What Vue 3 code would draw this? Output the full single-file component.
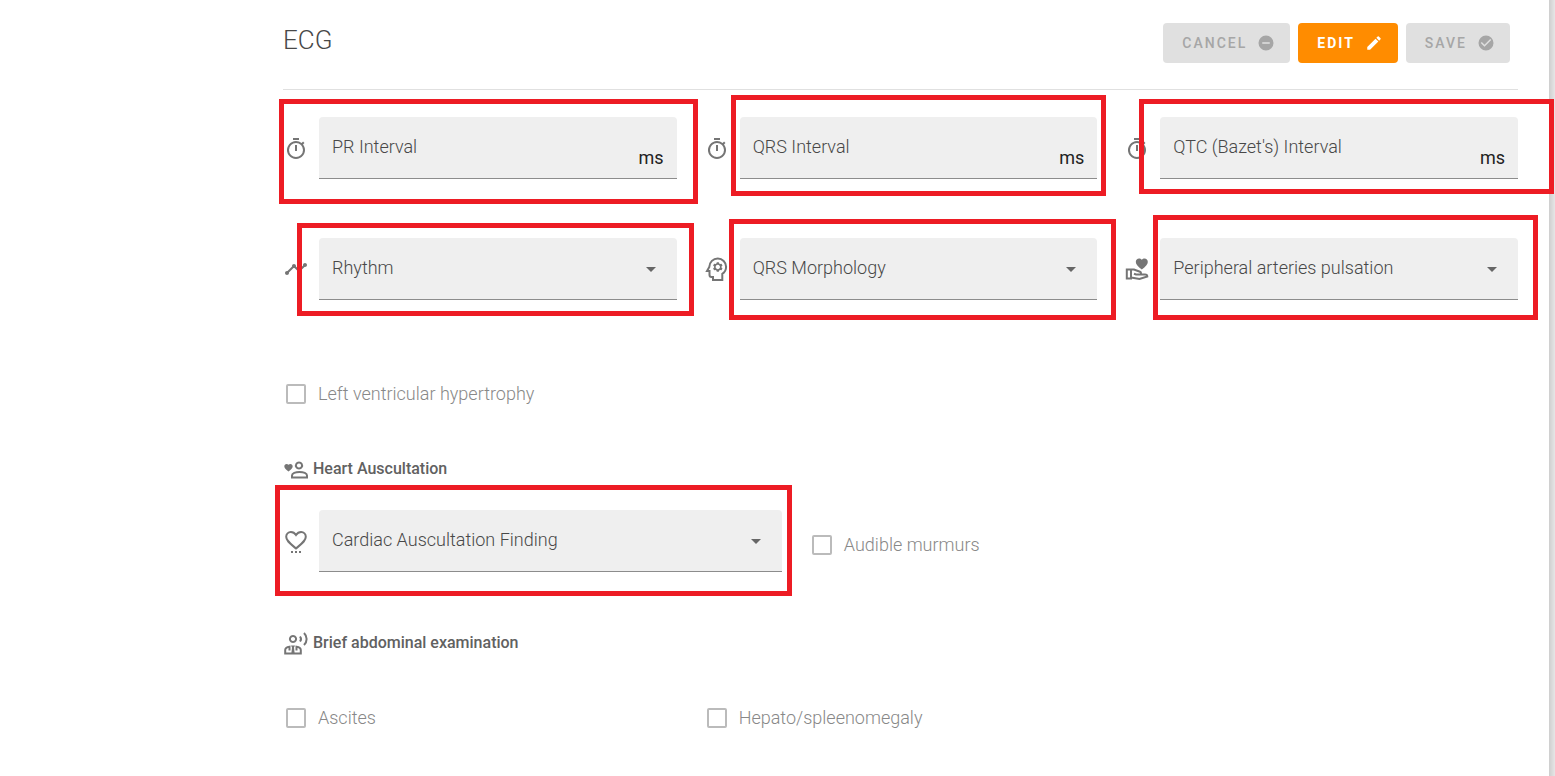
<script setup>
import { reactive } from 'vue'

const intervals = [
  { id: 'pr', label: 'PR Interval' },
  { id: 'qrs', label: 'QRS Interval' },
  { id: 'qtc', label: "QTC (Bazet's) Interval" },
]

const selects = [
  { id: 'rhythm', label: 'Rhythm', icon: 'timeline' },
  { id: 'morphology', label: 'QRS Morphology', icon: 'head' },
  { id: 'pulsation', label: 'Peripheral arteries pulsation', icon: 'hand' },
]

const values = reactive({
  pr: '', qrs: '', qtc: '', rhythm: '', morphology: '', pulsation: '', cardiac: '',
})
</script>

<template>
  <div class="page">
    <main class="content">
      <header class="head">
        <h1>ECG</h1>
        <div class="actions">
          <button type="button" class="btn" disabled>
            CANCEL
            <svg viewBox="0 0 24 24"><path d="M12 2a10 10 0 1 0 0 20 10 10 0 0 0 0-20zm5 11H7v-2h10v2z" /></svg>
          </button>
          <button type="button" class="btn primary">
            EDIT
            <svg viewBox="0 0 24 24"><path d="M3 17.25V21h3.75L17.81 9.94l-3.75-3.75L3 17.25zM20.71 7.04a1 1 0 0 0 0-1.41l-2.34-2.34a1 1 0 0 0-1.41 0l-1.83 1.83 3.75 3.75 1.83-1.83z" /></svg>
          </button>
          <button type="button" class="btn" disabled>
            SAVE
            <svg viewBox="0 0 24 24"><path d="M12 2a10 10 0 1 0 0 20 10 10 0 0 0 0-20zm-2 15l-5-5 1.41-1.41L10 14.17l7.59-7.59L19 8l-9 9z" /></svg>
          </button>
        </div>
      </header>

      <section class="grid first">
        <div v-for="f in intervals" :key="f.id" class="cell third">
          <svg class="icon low" viewBox="0 0 24 24"><path d="M15 1H9v2h6V1zm-4 13h2V8h-2v6zm8.03-6.61l1.42-1.42c-.43-.51-.9-.99-1.41-1.41l-1.42 1.42A8.96 8.96 0 0 0 12 4a9 9 0 1 0 7.03 3.39zM12 20a7 7 0 1 1 0-14 7 7 0 0 1 0 14z" /></svg>
          <div class="field">
            <input :id="f.id" v-model="values[f.id]" type="text" />
            <label :for="f.id">{{ f.label }}</label>
            <span class="suffix">ms</span>
          </div>
          <span class="mark" :class="'mark-' + f.id"></span>
        </div>
      </section>

      <section class="grid second">
        <div v-for="f in selects" :key="f.id" class="cell third">
          <svg v-if="f.icon === 'timeline'" class="icon" viewBox="0 0 24 24"><path d="M23 8c0 1.1-.9 2-2 2-.18 0-.35-.02-.51-.07l-3.56 3.55c.05.16.07.34.07.52 0 1.1-.9 2-2 2s-2-.9-2-2c0-.18.02-.36.07-.52l-2.55-2.55c-.16.05-.34.07-.52.07s-.36-.02-.52-.07l-4.55 4.56c.05.16.07.33.07.51 0 1.1-.9 2-2 2s-2-.9-2-2 .9-2 2-2c.18 0 .35.02.51.07l4.56-4.55C8.02 9.36 8 9.18 8 9c0-1.1.9-2 2-2s2 .9 2 2c0 .18-.02.36-.07.52l2.55 2.55c.16-.05.34-.07.52-.07s.36.02.52.07l3.55-3.56C19.02 8.35 19 8.18 19 8c0-1.1.9-2 2-2s2 .9 2 2z" /></svg>
          <svg v-else-if="f.icon === 'head'" class="icon" viewBox="0 0 24 24">
            <path class="line" d="M8 23v-3H6.500a2 2 0 0 1-2-2v-4H2l2.300-4.100C4.500 5 8.100 1.500 12.800 1.500a8.300 8.300 0 0 1 8.300 8.300c0 3.200-1.600 5.700-3.800 7V23z" />
            <path fill-rule="evenodd" d="M11.800 5.200h2l.4 1.400.9.500 1.400-.4 1 1.800-1 1v1l1 1-1 1.800-1.400-.4-.9.500-.4 1.400h-2l-.4-1.400-.9-.5-1.400.4-1-1.800 1-1v-1l-1-1 1-1.800 1.400.4.900-.5zM12.800 7.800a2.200 2.200 0 1 0 .01 0z" />
          </svg>
          <svg v-else class="icon" viewBox="0 0 24 24">
            <path d="M16.800 12.500c-3.800-3.200-6-5-6-7.600 0-1.900 1.500-3.400 3.300-3.400 1 0 2 .5 2.700 1.300.7-.8 1.700-1.300 2.700-1.300 1.900 0 3.300 1.500 3.300 3.400 0 2.600-2.200 4.400-6 7.600z" />
            <path class="line" d="M1.800 12.500H6v9H1.800zM6 12.500h3l6 2.300c1.500.6 1.300 2.700-.3 2.700H11l-2-.8M15.500 17.500H20c1.500 0 2.300.8 2.300 2L14.500 22 6 20.500" />
          </svg>
          <div class="field">
            <select :id="f.id" v-model="values[f.id]"><option value=""></option></select>
            <label :for="f.id">{{ f.label }}</label>
            <span class="arrow"></span>
          </div>
          <span class="mark" :class="'mark-' + f.id"></span>
        </div>
      </section>

      <label class="check lvh"><input type="checkbox" disabled /><span>Left ventricular hypertrophy</span></label>

      <h2>
        <svg class="icon" viewBox="0 0 24 24">
          <path d="M4.500 14.500C2.300 12.500.3 11.200.3 9.200c0-1.300 1-2.300 2.300-2.300.7 0 1.400.3 1.900.9.500-.6 1.200-.9 1.900-.9 1.300 0 2.300 1 2.300 2.300 0 2-2 3.300-4.200 5.300z" />
          <path class="line" d="M15 5.400a3.100 3.100 0 1 0 .01 0zM8 20.500v-2c0-2.200 3.500-3.600 7.500-3.600s7.500 1.400 7.500 3.600v2z" />
        </svg>
        Heart Auscultation
      </h2>

      <section class="grid auscultation">
        <div class="cell five">
          <svg class="icon low" viewBox="0 0 24 24">
            <path class="line" d="M12 18.500C6.500 13.700 2.200 10.800 2.200 6.800 2.200 4 4.300 2 6.900 2 8.800 2 10.800 3.200 12 5c1.200-1.800 3.200-3 5.100-3 2.600 0 4.700 2 4.700 4.800 0 4-4.300 6.900-9.800 11.700z" />
            <path d="M7 21h2v2H7zm4 0h2v2h-2zm4 0h2v2h-2z" />
          </svg>
          <div class="field">
            <select id="cardiac" v-model="values.cardiac"><option value=""></option></select>
            <label for="cardiac">Cardiac Auscultation Finding</label>
            <span class="arrow"></span>
          </div>
          <span class="mark mark-cardiac"></span>
        </div>
        <label class="check third murmurs"><input type="checkbox" disabled /><span>Audible murmurs</span></label>
      </section>

      <h2 class="abdominal">
        <svg class="icon" viewBox="0 0 24 24">
          <path class="line" d="M9 4.900a3.100 3.100 0 1 0 .01 0zM5.500 22.500H1.200V19c0-1.700 1.500-2.700 4.300-3.200v3.700M12.500 22.500h4.300V19c0-1.700-1.500-2.700-4.300-3.200v3.700M5 22.500h8" />
          <path d="M7 14.500h4l-1 2 .6 5.500H7.400L8 16.500z" />
          <path class="line" d="M16 5.500c1.200 1.500 1.200 3.500 0 5M20 2c3.500 3.500 3.500 8.500 0 12" />
        </svg>
        Brief abdominal examination
      </h2>

      <section class="grid last">
        <label class="check third"><input type="checkbox" disabled /><span>Ascites</span></label>
        <label class="check third"><input type="checkbox" disabled /><span>Hepato/spleenomegaly</span></label>
      </section>
    </main>
    <div class="edge"></div>
  </div>
</template>

<style>
body {
  background: #fff;
}
</style>

<style scoped>
.page {
  display: flex;
  min-height: 100vh;
  font-family: Roboto, sans-serif;
  font-size: 18px;
  font-weight: 300;
  line-height: 24px;
  color: #484848;
}
.content {
  flex: 1;
  padding: 0 31px 0 283px;
}
.edge {
  width: 6px;
  background: linear-gradient(90deg, #cecece, #e6e6e6);
}
.head {
  display: flex;
  justify-content: space-between;
  align-items: flex-start;
  height: 89px;
  border-bottom: 1px solid #e0e0e0;
}
h1 {
  margin: 24px 0 0;
  font-size: 26px;
  font-weight: 300;
  line-height: 32px;
}
.actions {
  display: flex;
  gap: 8px;
  padding: 23px 8px 0 0;
}
.btn {
  display: flex;
  align-items: center;
  gap: 10px;
  height: 40px;
  padding: 0 15px 0 19px;
  border: 0;
  border-radius: 4px;
  background: #e0e0e0;
  color: #a6a6a6;
  font: 500 14px/20px Roboto, sans-serif;
  letter-spacing: 2px;
}
.btn svg {
  width: 18px;
  height: 18px;
  fill: currentColor;
}
.primary {
  background: #ff8c00;
  color: #fff;
  font-weight: 700;
}
.grid {
  display: grid;
  grid-template-columns: repeat(12, 1fr);
  column-gap: 27px;
}
.third {
  grid-column: span 4;
}
.five {
  grid-column: span 5;
}
.first {
  margin-top: 27px;
}
.second {
  margin-top: 59px;
}
.cell {
  position: relative;
  display: flex;
  align-items: center;
  gap: 10px;
}
.icon {
  flex: none;
  width: 24px;
  height: 24px;
  margin: 0 1px;
  fill: #757575;
}
.low {
  margin-top: 2px;
}
.line {
  fill: none;
  stroke: #757575;
  stroke-width: 2;
}
.field {
  flex: 1;
  display: grid;
  min-width: 0;
  height: 62px;
}
.field > * {
  grid-area: 1 / 1;
}
.field input,
.field select {
  width: 100%;
  height: 62px;
  box-sizing: border-box;
  margin: 0;
  padding: 20px 48px 0 13px;
  border: 0;
  border-bottom: 1px solid #8c8c8c;
  border-radius: 4px 4px 0 0;
  background: #efefef;
  font: inherit;
  appearance: none;
}
.field label,
.suffix,
.arrow {
  pointer-events: none;
}
.field label {
  padding: 18px 0 0 13px;
}
.suffix {
  justify-self: end;
  padding: 29px 13px 0 0;
  color: #222;
  font-weight: 400;
}
.arrow {
  place-self: center end;
  margin-right: 21px;
  border: 5px solid transparent;
  border-top-color: #666;
  border-bottom: 0;
}
.check {
  display: flex;
  align-items: center;
  gap: 12px;
  color: #888;
}
.check input {
  appearance: none;
  width: 20px;
  height: 20px;
  box-sizing: border-box;
  margin: 0 0 0 3px;
  border: 2px solid #bbb;
  border-radius: 2px;
}
.lvh {
  margin-top: 82px;
}
h2 {
  display: flex;
  align-items: center;
  gap: 4px;
  margin: 51px 0 0;
  font-size: 16px;
  font-weight: 500;
  color: #616161;
}
.auscultation {
  margin-top: 29px;
}
.murmurs {
  padding-top: 8px;
}
.abdominal {
  margin-top: 59px;
}
.last {
  margin-top: 51px;
}
.mark {
  position: absolute;
  border: 5px solid #ed1c24;
  pointer-events: none;
}
.mark-pr {
  inset: -18px -21px -25px -4px;
}
.mark-qrs {
  inset: -22px -9px -17px 27px;
}
.mark-qtc {
  inset: -18px -36px -15px 15px;
}
.mark-rhythm {
  inset: -15px -17px -16px 14px;
}
.mark-morphology {
  inset: -19px -19px -20px 25px;
}
.mark-pulsation {
  inset: -23px -20px -20px 29px;
}
.mark-cardiac {
  inset: -25px -10px -24px -8px;
}
</style>
